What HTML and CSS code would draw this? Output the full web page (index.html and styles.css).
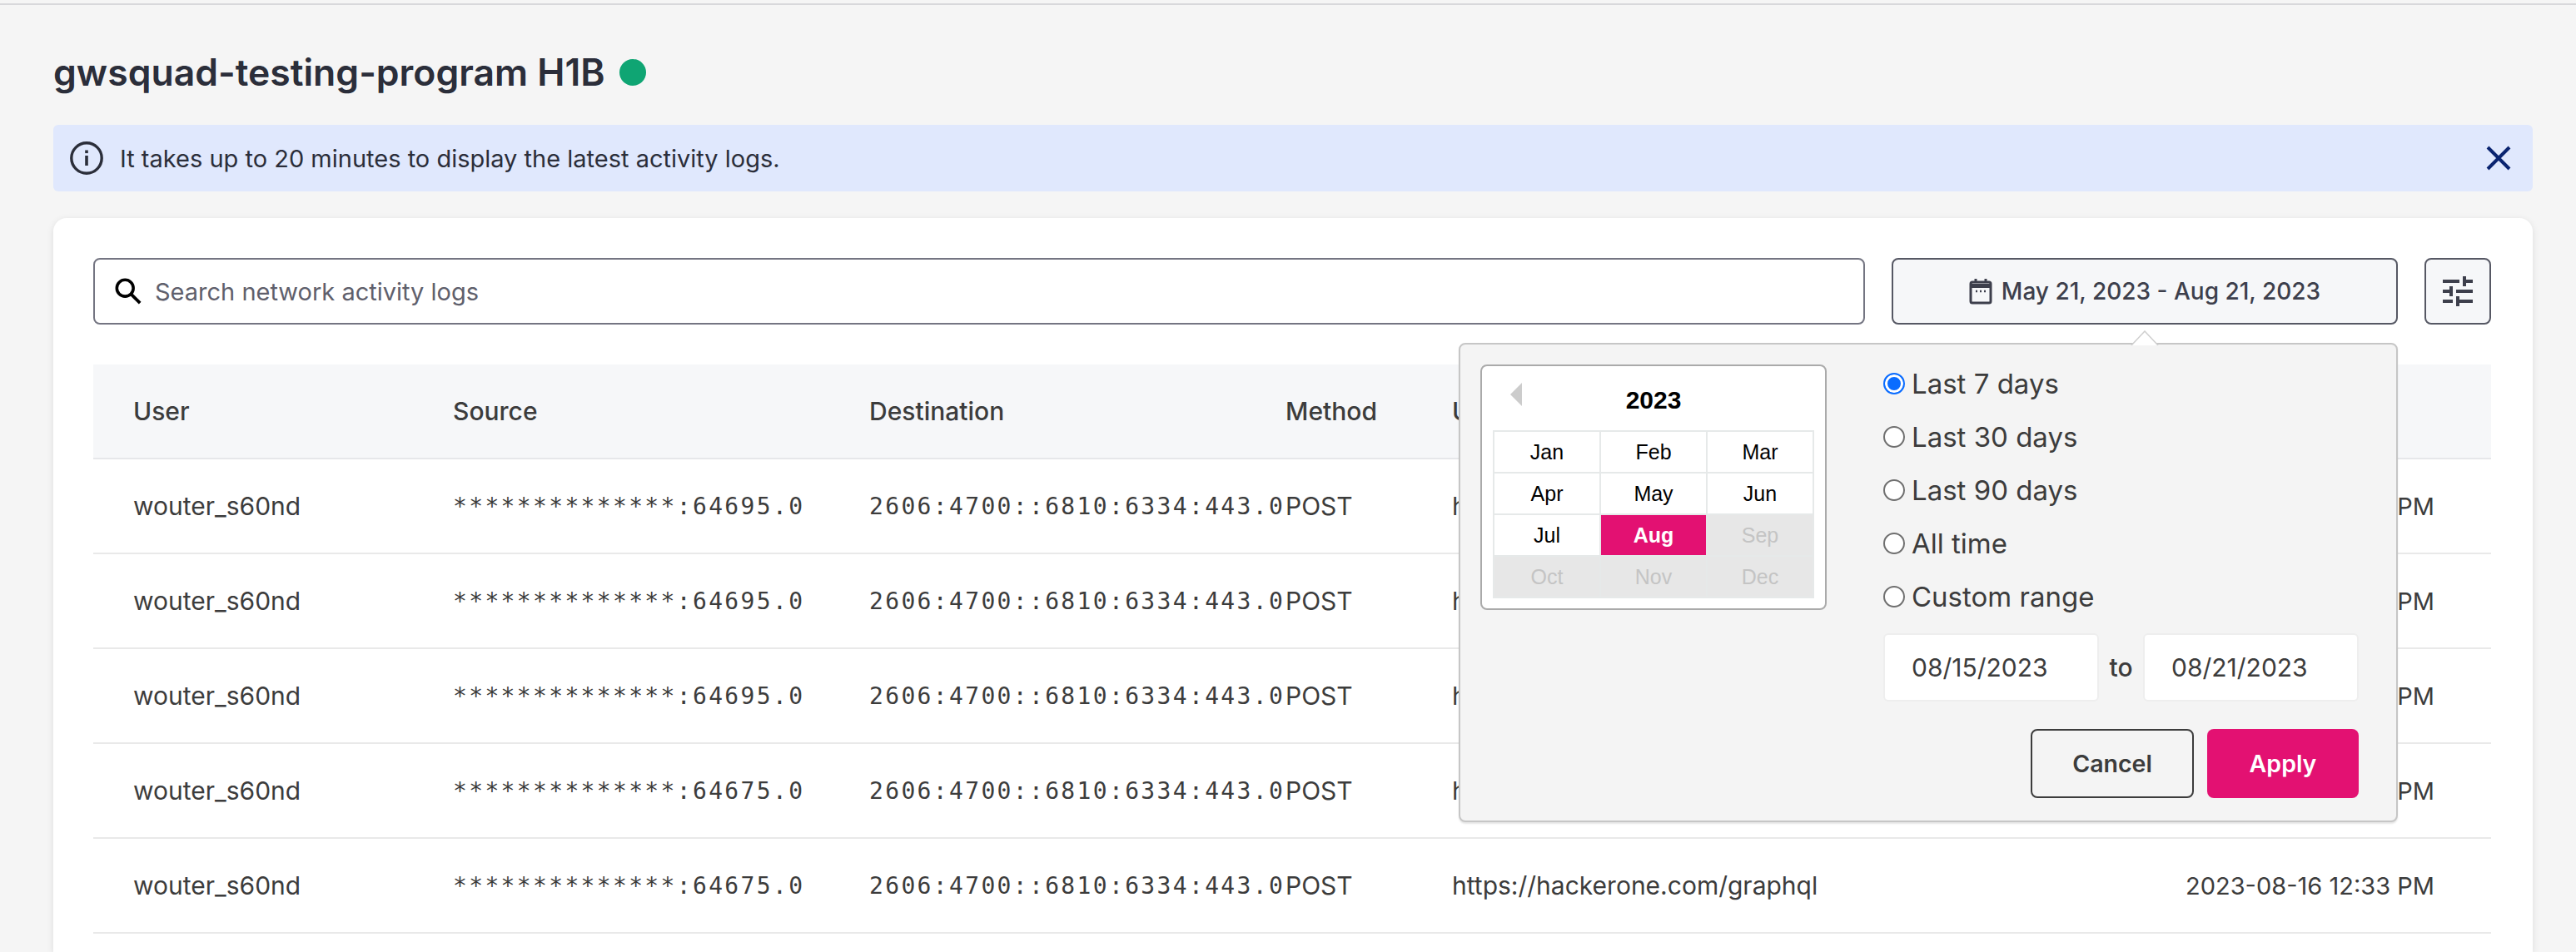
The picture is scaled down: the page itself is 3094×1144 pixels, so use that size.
FILE: index.html
```html
<html>
  <head>
    <link rel="stylesheet" href="styles.css">
    <title>Activity logs</title>
  </head>
  <body>
    <div class='topline'></div>
    <div class='page'>
      <h1 class='title'>gwsquad-testing-program H1B <span class='dot'></span></h1>
      <div class='banner'>
        <svg class='info-icon' viewBox='0 0 40 40' width='40' height='40'>
          <circle cx='20' cy='20' r='18.2' fill='none' stroke='#2b2e3a' stroke-width='3.4'/>
          <rect x='18.2' y='17' width='3.6' height='12' fill='#2b2e3a'/>
          <rect x='18.2' y='10.5' width='3.6' height='3.6' fill='#2b2e3a'/>
        </svg>
        <span class='banner-text'>It takes up to 20 minutes to display the latest activity logs.</span>
        <svg class='close-icon' viewBox='0 0 30 30' width='30' height='30'>
          <path d='M2 2 L28 28 M28 2 L2 28' stroke='#0a2470' stroke-width='4' fill='none'/>
        </svg>
      </div>
      <div class='card'>
        <div class='toolbar'>
          <div class='search'>
            <svg viewBox='0 0 36 36' width='34' height='34'>
              <circle cx='14' cy='14' r='10.5' fill='none' stroke='#000' stroke-width='3.8'/>
              <path d='M21.5 21.5 L33 33' stroke='#000' stroke-width='4' fill='none'/>
            </svg>
            <span>Search network activity logs</span>
          </div>
          <div class='date-btn'>
            <svg viewBox='0 0 28 32' width='28' height='32'>
              <rect x='2' y='5' width='24' height='25' rx='2' fill='none' stroke='#3d3f4c' stroke-width='3'/>
              <path d='M2 9.5 H26' stroke='#3d3f4c' stroke-width='5'/>
              <path d='M8 1 V6 M20 1 V6' stroke='#3d3f4c' stroke-width='3'/>
              <path d='M8 16 h2 M13 16 h2 M18 16 h2' stroke='#3d3f4c' stroke-width='2.4'/>
            </svg>
            <span>May 21, 2023 - Aug 21, 2023</span>
          </div>
          <div class='filter-btn'>
            <svg viewBox='3 3 18 18' width='36' height='36'>
              <path fill='#3d3f4c' d='M3 17v2h6v-2H3zM3 5v2h10V5H3zm10 16v-2h8v-2h-8v-2h-2v6h2zM7 9v2H3v2h4v2h2V9H7zm14 4v-2H11v2h10zm-6-4h2V7h4V5h-4V3h-2v6z'/>
            </svg>
          </div>
        </div>
        <div class='table'>
          <div class='row head'>
            <div>User</div><div>Source</div><div>Destination</div><div>Method</div><div>URL</div><div>Time</div>
          </div>
          <div class='row'>
            <div>wouter_s60nd</div><div class='mono'>**************:64695.0</div><div class='mono'>2606:4700::6810:6334:443.0</div><div>POST</div><div>https://hackerone.com/graphql</div><div class='time'>2023-08-16 12:34 PM</div>
          </div>
          <div class='row'>
            <div>wouter_s60nd</div><div class='mono'>**************:64695.0</div><div class='mono'>2606:4700::6810:6334:443.0</div><div>POST</div><div>https://hackerone.com/graphql</div><div class='time'>2023-08-16 12:34 PM</div>
          </div>
          <div class='row'>
            <div>wouter_s60nd</div><div class='mono'>**************:64695.0</div><div class='mono'>2606:4700::6810:6334:443.0</div><div>POST</div><div>https://hackerone.com/graphql</div><div class='time'>2023-08-16 12:34 PM</div>
          </div>
          <div class='row'>
            <div>wouter_s60nd</div><div class='mono'>**************:64675.0</div><div class='mono'>2606:4700::6810:6334:443.0</div><div>POST</div><div>https://hackerone.com/graphql</div><div class='time'>2023-08-16 12:33 PM</div>
          </div>
          <div class='row'>
            <div>wouter_s60nd</div><div class='mono'>**************:64675.0</div><div class='mono'>2606:4700::6810:6334:443.0</div><div>POST</div><div>https://hackerone.com/graphql</div><div class='time'>2023-08-16 12:33 PM</div>
          </div>
        </div>

        <div class='popover'>
          <svg class='arrow' viewBox='0 0 34 18' width='34' height='18'>
            <polygon points='1,18 17,1 33,18' fill='white'/>
            <path d='M1 18 L17 1 L33 18' fill='none' stroke='#cfcfcf' stroke-width='1.5'/>
          </svg>
          <div class='calendar'>
            <div class='cal-head'><span class='cal-prev'></span><span>2023</span></div>
            <div class='months'>
              <div>Jan</div><div>Feb</div><div>Mar</div>
              <div>Apr</div><div>May</div><div>Jun</div>
              <div>Jul</div><div class='active'>Aug</div><div class='off'>Sep</div>
              <div class='off'>Oct</div><div class='off'>Nov</div><div class='off'>Dec</div>
            </div>
          </div>
          <div class='range'>
            <label class='radio'><span class='circle on'></span>Last 7 days</label>
            <label class='radio'><span class='circle'></span>Last 30 days</label>
            <label class='radio'><span class='circle'></span>Last 90 days</label>
            <label class='radio'><span class='circle'></span>All time</label>
            <label class='radio'><span class='circle'></span>Custom range</label>
            <div class='dates'>
              <div class='date-input'>08/15/2023</div>
              <span>to</span>
              <div class='date-input'>08/21/2023</div>
            </div>
            <div class='actions'>
              <div class='btn cancel'>Cancel</div>
              <div class='btn apply'>Apply</div>
            </div>
          </div>
        </div>
      </div>
    </div>
  </body>
</html>
```

FILE: styles.css
```css
html, body {
  height: 100%;
}
body {
  margin: 0;
  overflow: hidden;
  background-color: #f5f5f5;
  font-family: Inter, "Noto Sans", sans-serif;
  color: #2b2e3a;
}
.topline {
  height: 4px;
  border-bottom: 2px solid #d8d8db;
}
.page {
  padding: 0 52px 0 64px;
}

.title {
  margin: 0;
  padding: 56px 0 38px;
  font-size: 44.5px;
  line-height: 50px;
  font-weight: 600;
  display: flex;
  align-items: center;
  gap: 17px;
}
.dot {
  width: 32px;
  height: 32px;
  border-radius: 50%;
  background-color: #0fa573;
}

.banner {
  height: 80px;
  background-color: #e0e8fd;
  border-radius: 6px;
  display: flex;
  align-items: center;
  padding: 0 26px 0 20px;
  font-size: 29px;
}
.banner-text {
  flex: 1;
  margin-left: 20px;
}

.card {
  position: relative;
  margin-top: 32px;
  height: 882px;
  background-color: white;
  border-radius: 16px 16px 0 0;
  box-shadow: 0 2px 8px rgba(0, 0, 0, 0.1);
  padding: 48px 50px 0 48px;
  box-sizing: border-box;
}

.toolbar {
  display: flex;
  gap: 32px;
  height: 80px;
}
.search {
  flex: 1;
  border: 2px solid #747582;
  border-radius: 8px;
  display: flex;
  align-items: center;
  gap: 15px;
  padding-left: 23px;
  font-size: 29px;
  color: #5f606c;
}
.date-btn {
  width: 608px;
  box-sizing: border-box;
  border: 2px solid #565864;
  border-radius: 8px;
  background-color: #f6f7f9;
  display: flex;
  align-items: center;
  justify-content: center;
  gap: 11px;
  font-size: 28px;
  font-weight: 500;
  color: #3d3f4c;
}
.filter-btn {
  width: 80px;
  box-sizing: border-box;
  border: 2px solid #565864;
  border-radius: 8px;
  background-color: #f6f7f9;
  display: flex;
  align-items: center;
  justify-content: center;
}

.table {
  margin-top: 48px;
  font-size: 30px;
  color: #3c3c3c;
}
.row {
  display: grid;
  grid-template-columns: 384px 500px 500px 200px 1fr 340px;
  height: 114px;
  box-sizing: border-box;
  align-items: center;
  padding: 0 68px 0 48px;
  border-bottom: 2px solid #e9e9e9;
}
.row.head {
  background-color: #f6f7f9;
  border-bottom: 2px solid #e6e7ea;
  font-weight: 500;
}
.mono {
  font-family: "DejaVu Sans Mono", "Liberation Mono", monospace;
  font-size: 28px;
  letter-spacing: 2.34px;
  white-space: nowrap;
}
.time {
  text-align: right;
  font-size: 29px;
  white-space: nowrap;
}

.popover {
  position: absolute;
  top: 150px;
  left: 1688px;
  width: 1128px;
  height: 576px;
  box-sizing: border-box;
  background-color: #f4f4f4;
  border: 2px solid #c6c6c6;
  border-radius: 8px;
  box-shadow: 0 2px 2px rgba(0, 0, 0, 0.1);
  display: flex;
  padding: 24px 45px 0 24px;
}
.arrow {
  position: absolute;
  top: -17px;
  left: 805px;
}

.calendar {
  width: 416px;
  height: 295px;
  box-sizing: border-box;
  background-color: white;
  border: 2px solid #aaaaaa;
  border-radius: 8px;
  padding: 0 13px;
  font-family: "Liberation Sans", Arial, sans-serif;
  color: black;
}
.cal-head {
  position: relative;
  height: 77px;
  display: flex;
  align-items: center;
  justify-content: center;
  font-size: 30px;
  font-weight: bold;
  padding-top: 4px;
  box-sizing: border-box;
}
.cal-prev {
  position: absolute;
  left: 21px;
  top: 20px;
  border-top: 14px solid transparent;
  border-bottom: 14px solid transparent;
  border-right: 14px solid #cccccc;
}
.months {
  display: grid;
  grid-template-columns: repeat(3, 1fr);
  grid-auto-rows: 48px;
  gap: 2px;
  padding: 2px;
  background-color: #e6e9e9;
  font-size: 25px;
}
.months > div {
  background-color: white;
  display: flex;
  align-items: center;
  justify-content: center;
}
.months > div.active {
  background-color: #e31172;
  color: white;
  font-weight: bold;
}
.months > div.off {
  background-color: #e7e7e7;
  color: #c4c4c4;
}

.range {
  flex: 1;
  margin-left: 68px;
  font-size: 33px;
  color: #3c3c3c;
}
.radio {
  display: flex;
  align-items: center;
  gap: 8px;
  height: 64px;
}
.radio:first-child {
  margin-top: -9px;
}
.circle {
  width: 26px;
  height: 26px;
  box-sizing: border-box;
  border: 2px solid #6f6f6f;
  border-radius: 50%;
  background-color: white;
}
.circle.on {
  border: 2px solid #0a6cff;
  background-color: #0a6cff;
  box-shadow: inset 0 0 0 3px white;
}
.dates {
  display: flex;
  align-items: center;
  justify-content: space-between;
  margin-top: 12px;
  font-size: 30px;
}
.dates > span {
  font-weight: 500;
}
.date-input {
  width: 259px;
  height: 82px;
  box-sizing: border-box;
  background-color: white;
  border: 2px solid #eeeeee;
  border-radius: 6px;
  display: flex;
  align-items: center;
  padding-left: 32px;
}
.actions {
  display: flex;
  justify-content: flex-end;
  gap: 16px;
  margin-top: 33px;
  font-size: 28.5px;
  font-weight: 600;
}
.btn {
  height: 83px;
  box-sizing: border-box;
  border-radius: 8px;
  display: flex;
  align-items: center;
  justify-content: center;
}
.cancel {
  width: 196px;
  border: 2px solid #3c3c3c;
}
.apply {
  width: 182px;
  background-color: #e31172;
  color: white;
}
```
